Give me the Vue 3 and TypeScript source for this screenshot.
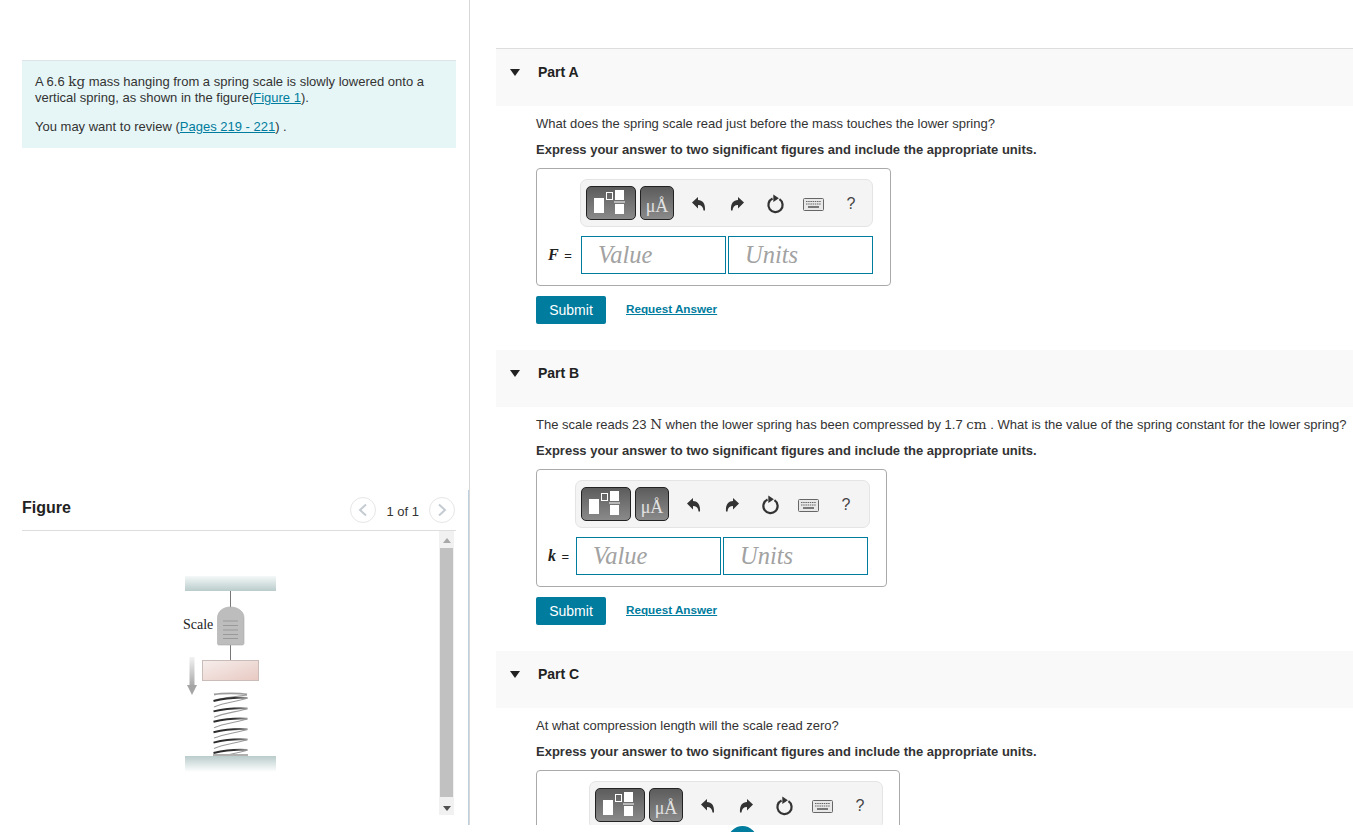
<script setup lang="ts">
interface Part {
  id: string
  title: string
  label: string
  cls: string
  segments: { t: string; unit?: boolean }[]
}

const parts: Part[] = [
  {
    id: 'a',
    title: 'Part A',
    label: 'F',
    cls: 'part-a',
    segments: [{ t: 'What does the spring scale read just before the mass touches the lower spring?' }],
  },
  {
    id: 'b',
    title: 'Part B',
    label: 'k',
    cls: 'part-b',
    segments: [
      { t: 'The scale reads 23 ' },
      { t: 'N', unit: true },
      { t: ' when the lower spring has been compressed by 1.7 ' },
      { t: 'cm', unit: true },
      { t: ' . What is the value of the spring constant for the lower spring?' },
    ],
  },
  {
    id: 'c',
    title: 'Part C',
    label: '',
    cls: 'part-c',
    segments: [{ t: 'At what compression length will the scale read zero?' }],
  },
]

const coilYs: number[] = [0, 1, 2, 3, 4, 5].map((i) => 698 + i * 10.4)
</script>

<template>
  <div class="shell">
    <div class="page">
      <aside class="left">
        <section class="intro">
          <p class="intro-line">
            A 6.6 <span class="unit">kg</span> mass hanging from a spring scale is slowly lowered onto a
            vertical spring, as shown in the figure(<a class="link" href="#">Figure 1</a>).
          </p>
          <p class="intro-review">You may want to review (<a class="link" href="#">Pages 219 - 221</a>) .</p>
        </section>

        <section class="figure">
          <header class="figure-head">
            <h2 class="figure-title">Figure</h2>
            <div class="pager">
              <span class="pager-btn">
                <svg width="10" height="14" viewBox="0 0 10 14"><path d="M8 1.500 2 7l6 5.500" fill="none" stroke="#c4ccd2" stroke-width="2" /></svg>
              </span>
              <span class="pager-text">1 of 1</span>
              <span class="pager-btn">
                <svg width="10" height="14" viewBox="0 0 10 14"><path d="M2 1.500 8 7l-6 5.500" fill="none" stroke="#c4ccd2" stroke-width="2" /></svg>
              </span>
            </div>
          </header>
          <div class="figure-body">
            <div class="figure-canvas">
              <svg class="diagram" width="120" height="210" viewBox="170 570 120 210">
                <defs>
                  <linearGradient id="ceil" x1="0" y1="0" x2="0" y2="1">
                    <stop offset="0" stop-color="#f4f8f8" />
                    <stop offset="1" stop-color="#b9cccb" />
                  </linearGradient>
                  <linearGradient id="floor" x1="0" y1="0" x2="0" y2="1">
                    <stop offset="0" stop-color="#b9cccb" />
                    <stop offset="1" stop-color="#ffffff" />
                  </linearGradient>
                  <linearGradient id="mass" x1="0" y1="0" x2="1" y2="1">
                    <stop offset="0" stop-color="#f6eeec" />
                    <stop offset="1" stop-color="#e8c9c2" />
                  </linearGradient>
                  <linearGradient id="shaft" x1="0" y1="0" x2="0" y2="1">
                    <stop offset="0" stop-color="#f2f2f2" />
                    <stop offset="1" stop-color="#a8a8a8" />
                  </linearGradient>
                  <linearGradient id="coil" gradientUnits="userSpaceOnUse" x1="213" y1="0" x2="248" y2="0">
                    <stop offset="0" stop-color="#2a2a2a" />
                    <stop offset=".6" stop-color="#333" />
                    <stop offset="1" stop-color="#a5a5a5" />
                  </linearGradient>
                </defs>
                <rect x="185" y="576" width="91" height="15" fill="url(#ceil)" />
                <path d="M230.500 591v16M230.500 645v15" stroke="#777" stroke-width="1" />
                <path d="M217.500 618c0-7 6-11 13-11s13.500 4 13.500 11v25c0 1.500-1 2-2 2h-23c-1 0-1.500-.5-1.500-2z" fill="#bdbdbd" stroke="#aaa" stroke-width=".6" />
                <path d="M223 621h15M223 625.500h15M223 630h15M223 634.500h15M223 638.500h15" stroke="#8a8a8a" stroke-width=".7" />
                <text x="183" y="628.500" class="scale-label">Scale</text>
                <rect x="202.500" y="660.500" width="56" height="20" fill="url(#mass)" stroke="#c9bcb9" stroke-width="1" />
                <rect x="189.500" y="657" width="5" height="29" fill="url(#shaft)" />
                <path d="M187 685h10l-5 10z" fill="#a5a5a5" />
                <path d="M214 694.500C222 693 240 693 247 694.500" stroke="#9c9c9c" stroke-width="1.800" fill="none" />
                <path d="M247 695C238 696.500 224 697 214 700.500" stroke="#9c9c9c" stroke-width="1.100" fill="none" />
                <g v-for="y in coilYs" :key="y">
                  <path :d="`M247.500 ${y}C240 ${y + 3} 224 ${y + 4.500} 214 ${y + 8.900}`" stroke="#9c9c9c" stroke-width="1.100" fill="none" />
                  <path :d="`M213.500 ${y + 3}C222 ${y + 1} 234 ${y - 1} 247.500 ${y}`" stroke="url(#coil)" stroke-width="2" fill="none" />
                </g>
                <rect x="213" y="754" width="35" height="2" fill="#b0b0b0" />
                <rect x="185" y="756" width="91" height="16" fill="url(#floor)" />
              </svg>
            </div>
            <div class="scrollbar">
              <span class="arrow-up"></span>
              <span class="thumb"></span>
              <span class="arrow-down"></span>
            </div>
          </div>
        </section>
      </aside>

      <main class="right">
        <section v-for="p in parts" :key="p.id" class="part" :class="p.cls">
          <header class="part-head">
            <span class="caret"></span>
            <h3 class="part-title">{{ p.title }}</h3>
          </header>
          <div class="part-body">
            <p class="question">
              <template v-for="(s, i) in p.segments" :key="i">
                <span v-if="s.unit" class="unit">{{ s.t }}</span>
                <template v-else>{{ s.t }}</template>
              </template>
            </p>
            <p class="instruction">Express your answer to two significant figures and include the appropriate units.</p>
            <div class="answer-box">
              <div class="toolbar">
                <button class="tool-btn tmpl" type="button">
                  <svg width="48" height="32" viewBox="0 0 48 32">
                    <rect x="7" y="11" width="10" height="15" fill="#fff" />
                    <rect x="19.500" y="5.500" width="6" height="7" fill="none" stroke="#fff" stroke-width="1" />
                    <rect x="28" y="3" width="9" height="10" fill="#fff" />
                    <rect x="27" y="14.500" width="11" height="1" fill="#fff" />
                    <rect x="28" y="17" width="9" height="10" fill="#fff" />
                  </svg>
                </button>
                <button class="tool-btn mu" type="button">μÅ</button>
                <span class="tool-icon">
                  <svg width="16" height="16" viewBox="0 0 16 16"><path d="M1 6.500 7 1v3c4.500.3 7.500 3 7 10.500h-1.500C12.300 11 10.500 9 7 9v3.500z" fill="#333" /></svg>
                </span>
                <span class="tool-icon">
                  <svg width="16" height="16" viewBox="0 0 16 16"><path d="M15 6.500 9 1v3C4.500 4.300 1.500 7 2 14.500h1.500C3.700 11 5.500 9 9 9v3.500z" fill="#333" /></svg>
                </span>
                <span class="tool-icon">
                  <svg width="20" height="20" viewBox="0 0 18 18">
                    <path d="M13 4.600A6.400 6.400 0 1 1 6.800 4.100" fill="none" stroke="#333" stroke-width="2" />
                    <path d="M7.500 .5 12.500 3.800 7.500 7.200z" fill="#333" />
                  </svg>
                </span>
                <span class="tool-icon">
                  <svg width="21" height="13" viewBox="0 0 21 13">
                    <rect x=".5" y=".5" width="20" height="12" rx="1" fill="#e8e8e8" stroke="#666" />
                    <path d="M3 3.500h15M3 6h15" stroke="#666" stroke-width="1.200" stroke-dasharray="1.500 .7" />
                    <path d="M5 9h11" stroke="#555" stroke-width="1.500" />
                  </svg>
                </span>
                <span class="tool-icon help">?</span>
              </div>
              <div class="input-row">
                <label class="symbol"><i v-if="p.label" class="symbol-var">{{ p.label }}</i><span v-if="p.label" class="symbol-eq"> =</span></label>
                <input class="field" placeholder="Value" />
                <input class="field" placeholder="Units" />
              </div>
            </div>
            <div class="actions">
              <button class="submit" type="button">Submit</button>
              <a class="request" href="#">Request Answer</a>
            </div>
          </div>
        </section>
      </main>
    </div>
    <span class="spinner"></span>
  </div>
</template>

<style>
html,
body {
  margin: 0;
  height: 100%;
  overflow: hidden;
  background: #fff;
}
</style>

<style scoped>
.shell {
  position: relative;
  width: 1353px;
  height: 832px;
  overflow: hidden;
}
.page {
  display: flex;
  height: 825px;
  width: 1353px;
  overflow: hidden;
  font-family: "Liberation Sans", Arial, sans-serif;
  font-size: 13px;
  color: #333;
  background: #fff;
}
.left {
  width: 469px;
  flex: none;
  border-right: 1px solid #d8d8d8;
  padding-top: 60px;
  box-sizing: content-box;
}
.intro {
  margin-left: 22px;
  width: 434px;
  height: 88px;
  box-sizing: border-box;
  background: #e6f6f6;
  border-top: 1px solid #dde3e6;
  padding: 13px 13px 0;
  line-height: 16px;
}
.intro p {
  margin: 0;
}
.intro-review {
  margin-top: 13px !important;
}
.unit {
  font-family: "DejaVu Serif", "Liberation Serif", serif;
  font-size: 13.500px;
  line-height: 1;
}
.link {
  color: #007c9e;
  text-decoration: underline;
}
.figure {
  margin-top: 342px;
  padding-left: 22px;
  width: 446px;
  box-sizing: content-box;
  height: 335px;
  border-right: 1px solid #bcd0e2;
}
.figure-head {
  width: 434px;
  height: 40px;
  display: flex;
  justify-content: space-between;
  border-bottom: 1px solid #ddd;
}
.figure-title {
  margin: 9px 0 0;
  font-size: 16px;
  line-height: 18px;
  font-weight: bold;
  color: #222;
}
.pager {
  display: flex;
  align-items: center;
  height: 26px;
  margin: 7px 1px 0 0;
}
.pager-btn {
  width: 26px;
  height: 26px;
  box-sizing: border-box;
  border: 1px solid #e6e6e6;
  border-radius: 50%;
  display: flex;
  align-items: center;
  justify-content: center;
}
.pager-text {
  margin: 4px 10px 0;
  line-height: 26px;
  white-space: nowrap;
}
.figure-body {
  display: flex;
  width: 432px;
  height: 284px;
}
.figure-canvas {
  flex: 1;
  padding: 39px 0 0 148px;
  box-sizing: border-box;
}
.diagram {
  display: block;
}
.scale-label {
  font-family: "Liberation Serif", serif;
  font-size: 14px;
  fill: #222;
}
.scrollbar {
  width: 15px;
  background: #f1f1f1;
  display: flex;
  flex-direction: column;
  align-items: center;
}
.arrow-up {
  width: 0;
  height: 0;
  margin: 7px 0 5px;
  border-left: 4px solid transparent;
  border-right: 4px solid transparent;
  border-bottom: 5px solid #a8a8a8;
}
.thumb {
  width: 13px;
  height: 249px;
  background: #c1c1c1;
}
.arrow-down {
  width: 0;
  height: 0;
  margin-top: 9px;
  border-left: 4px solid transparent;
  border-right: 4px solid transparent;
  border-top: 5px solid #505050;
}
.right {
  flex: 1;
  min-width: 0;
  margin-top: 48px;
  margin-left: 26px;
  border-top: 1px solid #ddd;
}
.part {
  height: 301px;
}
.part-head {
  height: 57px;
  background: #f9f9f9;
  display: flex;
  align-items: flex-start;
  padding-top: 15px;
  box-sizing: border-box;
}
.caret {
  width: 0;
  height: 0;
  margin: 5px 0 0 14px;
  border-left: 5.500px solid transparent;
  border-right: 5.500px solid transparent;
  border-top: 7px solid #222;
}
.part-title {
  margin: 0 0 0 18px;
  font-size: 14px;
  line-height: 16px;
  font-weight: bold;
  color: #222;
}
.part-body {
  padding-left: 40px;
}
.question {
  margin: 0;
  padding-top: 9px;
  line-height: 18px;
  white-space: nowrap;
}
.instruction {
  margin: 8px 0 0;
  line-height: 18px;
  font-weight: bold;
  white-space: nowrap;
}
.answer-box {
  margin-top: 9px;
  width: fit-content;
  box-sizing: border-box;
  height: 118px;
  border: 1px solid #aaa;
  border-radius: 4px;
  padding: 10px 17px 0 11px;
}
.part-b .answer-box {
  padding-right: 18px;
}
.toolbar {
  height: 48px;
  width: 293px;
  box-sizing: border-box;
  background: #f4f4f4;
  border: 1px solid #e4e4e4;
  border-radius: 7px;
  display: flex;
  align-items: center;
  padding-left: 5px;
  margin-left: 32px;
}
.part-b .toolbar {
  margin-left: 27px;
  margin-right: -2px;
  width: 295px;
}
.part-c .toolbar {
  margin-left: 41px;
  margin-right: -1px;
  width: 294px;
}
.tool-btn {
  height: 34px;
  box-sizing: border-box;
  border: 1px solid #222;
  border-radius: 5px;
  background: linear-gradient(#5c5c5c, #8a8a8a);
  padding: 0;
  display: flex;
  align-items: center;
  justify-content: center;
}
.tmpl {
  width: 50px;
}
.mu {
  width: 34px;
  margin: 0 6px 0 4px;
  padding-top: 6px;
  font-family: "Liberation Serif", serif;
  font-size: 18px;
  color: #e2e2e2;
}
.tool-icon {
  width: 38px;
  padding-top: 2px;
  display: flex;
  align-items: center;
  justify-content: center;
  color: #444;
}
.help {
  font-size: 16px;
}
.input-row {
  display: flex;
  align-items: center;
  margin-top: 9px;
  height: 38px;
}
.symbol {
  width: 33px;
  font-size: 13px;
  white-space: nowrap;
  color: #222;
}
.part-b .symbol {
  width: 28px;
}
.part-c .symbol {
  width: 42px;
}
.symbol-var {
  font-family: "Liberation Serif", serif;
  font-weight: bold;
  font-size: 16px;
}
.symbol-eq {
  margin-left: 2px;
}
.field {
  width: 145px;
  height: 38px;
  box-sizing: border-box;
  border: 1px solid #007c9e;
  border-radius: 0;
  padding: 0 0 0 16px;
  outline: none;
  font-family: "Liberation Serif", serif;
  font-style: italic;
  font-size: 24.500px;
  background: #fff;
}
.field + .field {
  margin-left: 2px;
}
.field::placeholder {
  color: #a2a2a2;
  opacity: 1;
}
.actions {
  display: flex;
  align-items: flex-start;
  margin-top: 10px;
}
.submit {
  width: 70px;
  height: 28px;
  border: 0;
  border-radius: 2px;
  background: #007c9e;
  color: #fff;
  font-family: "Liberation Sans", Arial, sans-serif;
  font-size: 14px;
  padding: 0;
}
.request {
  margin: 5px 0 0 20px;
  font-size: 11.700px;
  line-height: 16px;
  font-weight: bold;
  color: #007c9e;
  text-decoration: underline;
}
.spinner {
  position: absolute;
  left: 728px;
  top: 826px;
  width: 29px;
  height: 29px;
  border-radius: 50%;
  background: #007c9e;
}
</style>
